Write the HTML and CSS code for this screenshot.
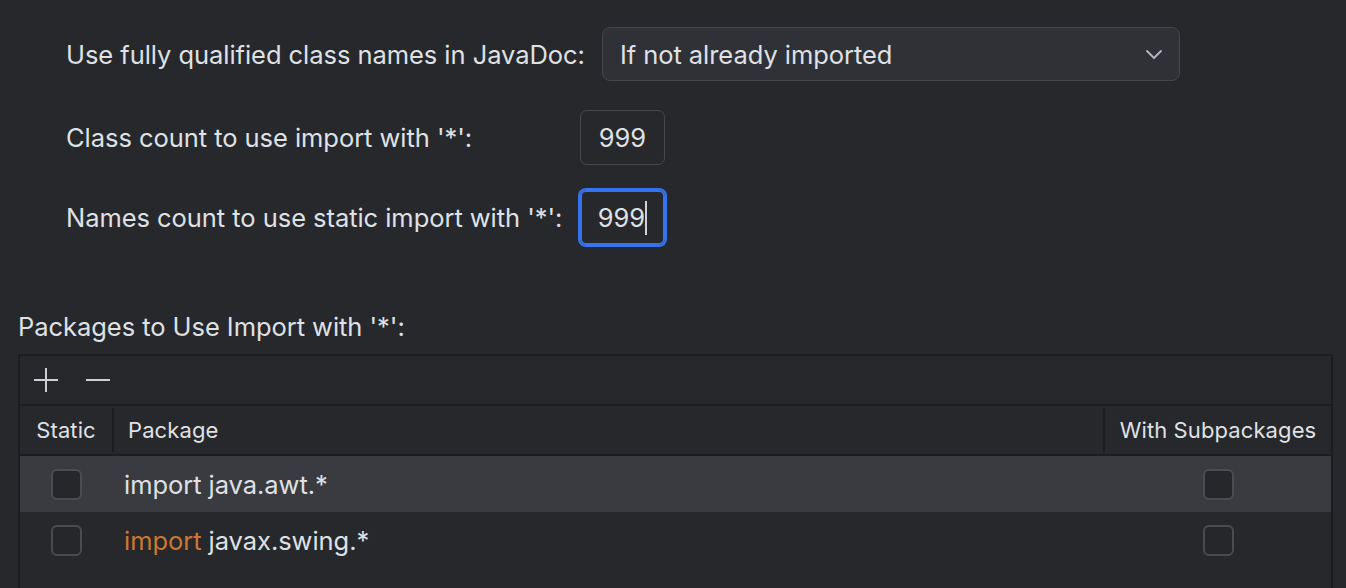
FILE: index.html
```html
<!DOCTYPE html>
<html>
<head>
<meta charset="utf-8">
<link rel="stylesheet" href="styles.css">
</head>
<body>
<div class="page">
  <div class="form">
    <div class="row row-combo">
      <span class="label">Use fully qualified class names in JavaDoc:</span>
      <div class="combo">
        <span>If not already imported</span>
        <svg class="chev" width="18" height="12" viewBox="0 0 18 12"><path d="M2 3 L9 10 L16 3" fill="none" stroke="#b4b8bf" stroke-width="1.8" stroke-linecap="round" stroke-linejoin="round"/></svg>
      </div>
    </div>
    <div class="row row-field">
      <span class="label fixed">Class count to use import with '*':</span>
      <div class="field">999</div>
    </div>
    <div class="row row-field second">
      <span class="label fixed">Names count to use static import with '*':</span>
      <div class="field focused">999<span class="caret"></span></div>
    </div>
  </div>

  <div class="section-title">Packages to Use Import with '*':</div>

  <div class="table">
    <div class="toolbar">
      <svg width="28" height="28" viewBox="0 0 28 28" class="tb-icon"><path d="M14 2 V26 M2 14 H26" stroke="#ced0d6" stroke-width="2"/></svg>
      <svg width="28" height="28" viewBox="0 0 28 28" class="tb-icon"><path d="M2 14 H26" stroke="#ced0d6" stroke-width="2"/></svg>
    </div>
    <div class="thead">
      <div class="c-static th">Static</div>
      <div class="c-pkg th">Package</div>
      <div class="c-sub th">With Subpackages</div>
    </div>
    <div class="trow selected">
      <div class="c-static"><span class="cb"></span></div>
      <div class="c-pkg">import java.awt.*</div>
      <div class="c-sub"><span class="cb"></span></div>
    </div>
    <div class="trow">
      <div class="c-static"><span class="cb"></span></div>
      <div class="c-pkg"><span class="kw">import</span> javax.swing.*</div>
      <div class="c-sub"><span class="cb"></span></div>
    </div>
  </div>
</div>
</body>
</html>
```

FILE: styles.css
```css
html, body {
  margin: 0;
  padding: 0;
  background: #27282c;
  height: 100%;
  overflow: hidden;
}
body {
  font-family: "Inter", "Noto Sans", sans-serif;
  font-size: 25.5px;
  letter-spacing: -0.05px;
  color: #dfe1e5;
}
.page {
  padding: 27px 0 0 18px;
  height: 100%;
  box-sizing: border-box;
  display: flex;
  flex-direction: column;
}
.form {
  padding-left: 48px;
  display: flex;
  flex-direction: column;
}
.row {
  display: flex;
  align-items: center;
}
.row-combo {
  gap: 17px;
}
.label.fixed {
  width: 514px;
}
.combo {
  width: 578px;
  height: 54px;
  box-sizing: border-box;
  border: 1px solid #44464b;
  border-radius: 8px;
  background: #303136;
  display: flex;
  align-items: center;
  justify-content: space-between;
  padding: 0 16px 0 17px;
}
.row-field {
  margin-top: 29px;
}
.row-field.second {
  margin-top: 25px;
}
.field {
  width: 85px;
  height: 55px;
  box-sizing: border-box;
  border: 1px solid #45474c;
  border-radius: 7px;
  display: flex;
  align-items: center;
  justify-content: center;
}
.field.focused {
  border: 2px solid #3574f0;
  box-shadow: 0 0 0 2px #3574f0;
  border-radius: 6px;
}
.caret {
  display: inline-block;
  width: 2px;
  height: 34px;
  background: #cfd1d6;
}
.section-title {
  margin-top: 68px;
  height: 28px;
  line-height: 28px;
}
.table {
  margin-top: 13px;
  margin-right: 13px;
  flex: 1;
  border: 2px solid #1c1d20;
  border-bottom: none;
  display: flex;
  flex-direction: column;
}
.toolbar {
  height: 48px;
  display: flex;
  align-items: center;
  gap: 24px;
  padding-left: 12px;
  border-bottom: 2px solid #1c1d20;
}
.thead, .trow {
  display: flex;
  align-items: center;
}
.thead {
  height: 48px;
  border-bottom: 2px solid #1c1d20;
  font-size: 22px;
  letter-spacing: 0.1px;
}
.trow {
  height: 56px;
}
.trow.selected {
  background: #3a3b40;
}
.c-static {
  width: 92px;
  display: flex;
  justify-content: center;
  align-items: center;
  flex: none;
}
.c-pkg {
  flex: 1;
  padding-left: 12px;
}
.c-sub {
  width: 226px;
  flex: none;
  display: flex;
  justify-content: center;
  align-items: center;
}
.th {
  align-self: stretch;
  display: flex;
  align-items: center;
}
.thead .c-pkg {
  padding-left: 14px;
  border-left: 2px solid #1c1d20;
  margin: 2px 0;
}
.thead .c-sub {
  border-left: 2px solid #1c1d20;
  margin: 2px 0;
}
.cb {
  width: 31px;
  height: 31px;
  box-sizing: border-box;
  border: 2px solid #4a4c52;
  border-radius: 6px;
  background: #26272b;
}
.kw {
  color: #cc7832;
}
```
